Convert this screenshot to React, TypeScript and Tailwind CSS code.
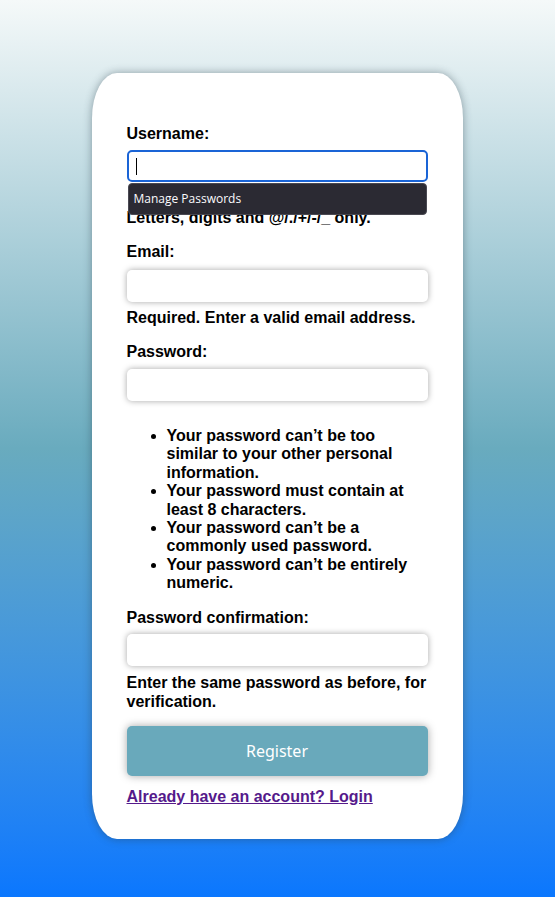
const inputClass =
  'block w-full h-8 px-2 rounded-[5px] bg-white shadow-[0_0_6px_rgba(0,0,0,0.35)] outline-none text-[16px]';

const App = () => {
  return (
    <div className="min-h-[897px] w-full bg-gradient-to-b from-[#f5f9f9] via-[#69abbe] to-[#0a77fe] flex justify-center pt-[73px] font-['Liberation_Sans',Arial,sans-serif] font-bold text-[16px] leading-[18.4px] text-black">
      <div className="w-[371px] h-[766px] -ml-px bg-white rounded-[25px/45px] shadow-[0_0_8px_rgba(40,60,70,0.45)] pl-[35px] pr-[35px] pt-[52px]">
        <form onSubmit={e => e.preventDefault()}>
          {/* Username */}
          <label htmlFor="username" className="block">Username:</label>
          <div className="relative mt-[7px]">
            <input
              id="username"
              type="text"
              className="block w-full h-8 px-2 rounded-[5px] bg-white border-2 border-[#1a64d6] outline-none"
            />
            <span className="absolute left-[9px] top-[8px] w-px h-[17px] bg-black" />
            <div className="absolute left-px top-[33px] w-[299px] h-8 rounded-[4px] bg-[#2b2a33] border border-[#4a4952] flex items-center px-[5px] font-['Open_Sans',sans-serif] font-normal text-[12px] text-[#fbfbfe] z-10">
              Manage Passwords
            </div>
          </div>
          <p className="mt-[27px]">Letters, digits and @/./+/-/_ only.</p>

          {/* Email */}
          <label htmlFor="email" className="block mt-[15px]">Email:</label>
          <input id="email" type="email" className={inputClass + ' mt-[9px]'} />
          <p className="mt-[7px]">Required. Enter a valid email address.</p>

          {/* Password */}
          <label htmlFor="password1" className="block mt-[15px]">Password:</label>
          <input id="password1" type="password" className={inputClass + ' mt-2'} />
          <ul className="list-disc pl-10 mt-[26px]">
            <li>Your password can’t be too similar to your other personal information.</li>
            <li>Your password must contain at least 8 characters.</li>
            <li>Your password can’t be a commonly used password.</li>
            <li>Your password can’t be entirely numeric.</li>
          </ul>

          {/* Password confirmation */}
          <label htmlFor="password2" className="block mt-4">Password confirmation:</label>
          <input id="password2" type="password" className={inputClass + ' mt-[7px]'} />
          <p className="mt-2">Enter the same password as before, for verification.</p>

          <button
            type="submit"
            className="mt-[15px] w-full h-[50px] rounded-[5px] bg-[#69a9bb] shadow-[0_0_8px_rgba(0,0,0,0.35)] text-white font-['Noto_Sans',sans-serif] font-normal text-[16px]"
          >
            Register
          </button>
          <div className="mt-3">
            <a href="#" className="text-[#551a8b] underline">Already have an account? Login</a>
          </div>
        </form>
      </div>
    </div>
  );
};

export default App;
